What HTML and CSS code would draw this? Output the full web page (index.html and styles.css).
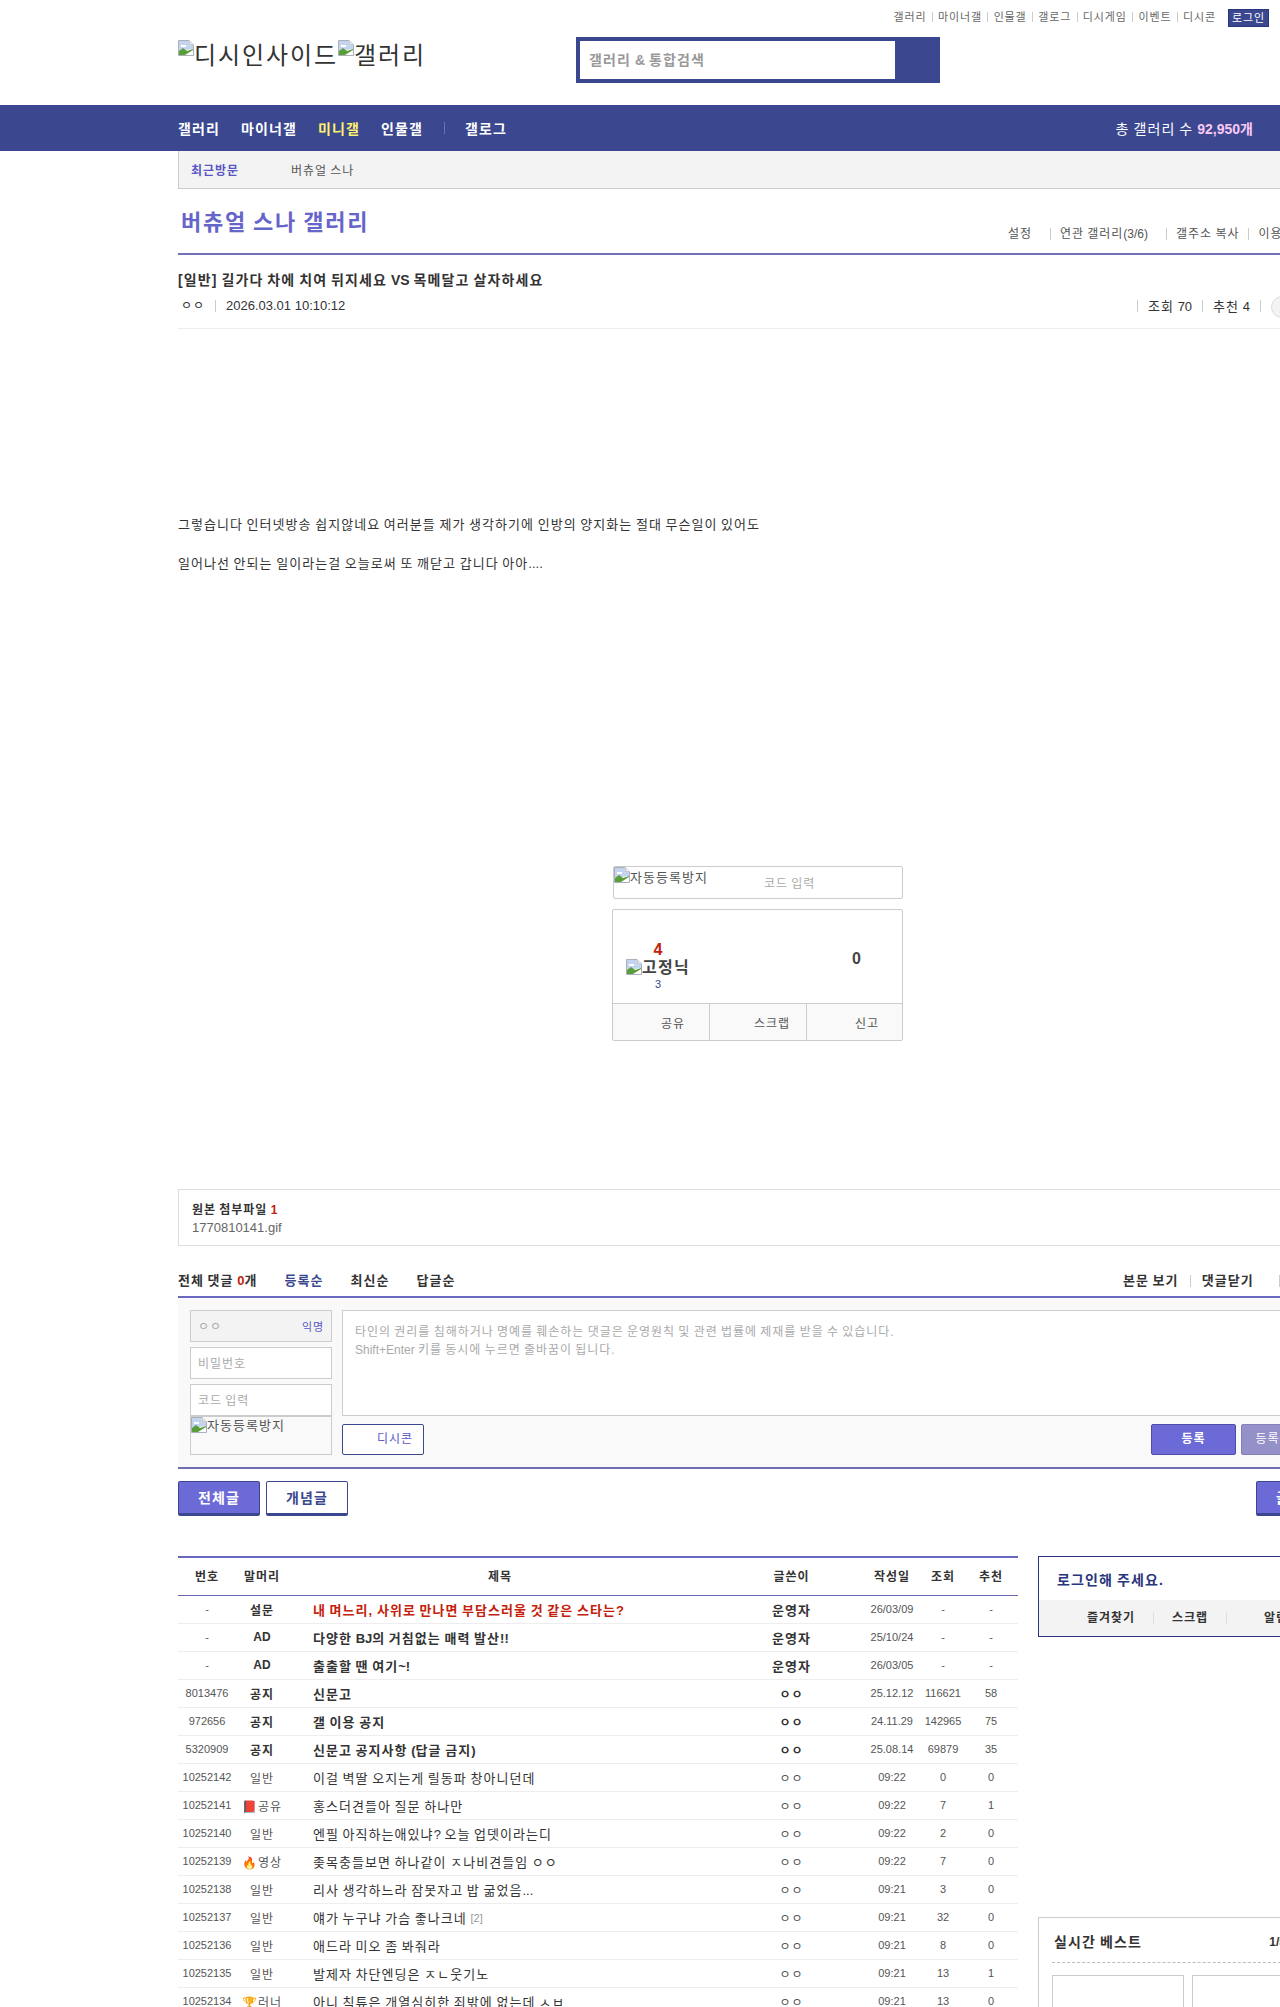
FILE: index.html
```html
<!DOCTYPE html>
<html lang="ko">
<head>
    <meta charset="UTF-8">
    <title>버츄얼 스나 갤러리</title>
    <link rel="stylesheet" href="styles.css">
</head>
<body>
    <svg class="sprite" width="0" height="0">
        <symbol id="broken" viewBox="0 0 16 16">
            <path d="M0.5 0.5H11L15.5 5V15.5H0.5Z" fill="#fff" stroke="#a9b0bb"/>
            <path d="M11 0.5V5H15.5" fill="#e8eaed" stroke="#a9b0bb"/>
            <path d="M1 1H10.5V5.5H15V9L1 11Z" fill="#c3d4f1"/>
            <path d="M1 15V11L5 8L9 11L15 9V10L7 15Z" fill="#5a9e3c"/>
            <path d="M3 5H8V7H3Z" fill="#fff"/>
        </symbol>
    </svg>
    <header class="top">
        <div class="top-links">
            <a>갤러리</a><i></i><a>마이너갤</a><i></i><a>인물갤</a><i></i><a>갤로그</a><i></i><a>디시게임</a><i></i><a>이벤트</a><i></i><a>디시콘</a>
            <span class="login-btn">로그인</span>
        </div>
        <div class="logo-row">
            <div class="logo"><svg class="broken"><use href="#broken"/></svg>디시인사이드<svg class="broken"><use href="#broken"/></svg>갤러리</div>
            <div class="search">
                <div class="search-input">갤러리 <span class="en">&amp;</span> 통합검색</div>
            </div>
        </div>
    </header>
    <nav class="gnb">
        <div class="gnb-left">
            <a>갤러리</a><a>마이너갤</a><a class="on">미니갤</a><a>인물갤</a><i></i><a>갤로그</a>
        </div>
        <div class="gnb-count">총 갤러리 수 <b><span class="en">92,950</span>개</b></div>
    </nav>

    <div class="wrap">
        <div class="recent"><b>최근방문</b><span>버츄얼 스나</span></div>

        <div class="gall-head">
            <h1>버츄얼 스나 갤러리</h1>
            <div class="gall-links">
                <a class="w-set">설정</a><i></i><a class="w-rel">연관 갤러리<span class="en">(3/6)</span></a><i></i><a>갤주소 복사</a><i></i><a>이용 안내</a>
            </div>
        </div>

        <div class="post-head">
            <h2>[일반] 길가다 차에 치여 뒤지세요 <span class="en">VS</span> 목메달고 살자하세요</h2>
            <div class="post-meta">
                <div class="post-writer"><span class="post-nick">ㅇㅇ</span><i></i><span class="en">2026.03.01 10:10:12</span></div>
                <div class="post-count"><i></i><span>조회 <span class="en">70</span></span><i></i><span>추천 <span class="en">4</span></span><i></i><span class="round"></span></div>
            </div>
        </div>

        <div class="post-body">
            <p>그렇습니다 인터넷방송 쉽지않네요 여러분들 제가 생각하기에 인방의 양지화는 절대 무슨일이 있어도</p>
            <p>일어나선 안되는 일이라는걸 오늘로써 또 깨닫고 갑니다 아아<span class="en">....</span></p>
        </div>

        <div class="vote">
            <div class="vote-code">
                <span class="alt"><svg class="broken"><use href="#broken"/></svg>자동등록방지</span>
                <span class="code-ph">코드 입력</span>
            </div>
            <div class="vote-box">
                <div class="vote-main">
                    <div class="vote-up">
                        <b class="up-num en">4</b>
                        <span class="fix"><svg class="broken"><use href="#broken"/></svg>고정닉</span>
                        <span class="fix-num en">3</span>
                    </div>
                    <b class="down-num en">0</b>
                </div>
                <div class="vote-btns"><span>공유</span><span>스크랩</span><span>신고</span></div>
            </div>
        </div>

        <div class="attach">
            <b>원본 첨부파일 <em class="en">1</em></b>
            <span class="en">1770810141.gif</span>
        </div>

        <div class="cmt-head">
            <div class="cmt-tabs"><b class="cmt-total">전체 댓글 <em class="en">0</em>개</b><b class="on">등록순</b><b>최신순</b><b>답글순</b></div>
            <div class="cmt-links"><b>본문 보기</b><i></i><b>댓글닫기</b><i class="gap"></i></div>
        </div>

        <div class="cmt-form">
            <div class="cmt-left">
                <div class="field name"><span>ㅇㅇ</span><em>익명</em></div>
                <div class="field">비밀번호</div>
                <div class="field code">코드 입력</div>
                <div class="field captcha"><svg class="broken"><use href="#broken"/></svg>자동등록방지</div>
            </div>
            <div class="cmt-right">
                <div class="cmt-text">타인의 권리를 침해하거나 명예를 훼손하는 댓글은 운영원칙 및 관련 법률에 제재를 받을 수 있습니다.<br><span class="en">Shift+Enter</span> 키를 동시에 누르면 줄바꿈이 됩니다.</div>
                <div class="cmt-btns">
                    <span class="dccon">디시콘</span>
                    <span class="reg">등록</span>
                    <span class="reg reg2">등록+추천</span>
                </div>
            </div>
        </div>

        <div class="list-btns">
            <span class="btn on">전체글</span>
            <span class="btn">개념글</span>
            <span class="btn on write">글쓰기</span>
        </div>

        <div class="list-wrap">
            <table class="list">
                <colgroup>
                    <col class="c-num"><col class="c-head"><col class="c-title"><col class="c-writer"><col class="c-date"><col class="c-view"><col class="c-rec">
                </colgroup>
                <thead>
                    <tr><th>번호</th><th>말머리</th><th class="th-title">제목</th><th>글쓴이</th><th>작성일</th><th>조회</th><th>추천</th></tr>
                </thead>
                <tbody>
                    <tr class="notice op"><td>-</td><td>설문</td><td class="title red">내 며느리, 사위로 만나면 부담스러울 것 같은 스타는<span class="en">?</span></td><td>운영자</td><td>26/03/09</td><td>-</td><td>-</td></tr>
                    <tr class="notice op"><td>-</td><td class="en">AD</td><td class="title">다양한 <span class="en">BJ</span>의 거침없는 매력 발산<span class="en">!!</span></td><td>운영자</td><td>25/10/24</td><td>-</td><td>-</td></tr>
                    <tr class="notice op"><td>-</td><td class="en">AD</td><td class="title">출출할 땐 여기<span class="en">~!</span></td><td>운영자</td><td>26/03/05</td><td>-</td><td>-</td></tr>
                    <tr class="notice"><td>8013476</td><td>공지</td><td class="title">신문고</td><td>ㅇㅇ</td><td>25.12.12</td><td>116621</td><td>58</td></tr>
                    <tr class="notice"><td>972656</td><td>공지</td><td class="title">갤 이용 공지</td><td>ㅇㅇ</td><td>24.11.29</td><td>142965</td><td>75</td></tr>
                    <tr class="notice"><td>5320909</td><td>공지</td><td class="title">신문고 공지사항 <span class="en">(</span>답글 금지<span class="en">)</span></td><td>ㅇㅇ</td><td>25.08.14</td><td>69879</td><td>35</td></tr>
                    <tr><td>10252142</td><td>일반</td><td class="title">이걸 벽딸 오지는게 릴동파 창아니던데</td><td>ㅇㅇ</td><td>09:22</td><td>0</td><td>0</td></tr>
                    <tr><td>10252141</td><td>📕공유</td><td class="title">홍스더견들아 질문 하나만</td><td>ㅇㅇ</td><td>09:22</td><td>7</td><td>1</td></tr>
                    <tr><td>10252140</td><td>일반</td><td class="title">엔필 아직하는애있냐<span class="en">?</span> 오늘 업뎃이라는디</td><td>ㅇㅇ</td><td>09:22</td><td>2</td><td>0</td></tr>
                    <tr><td>10252139</td><td>🔥영상</td><td class="title">좆목충들보면 하나같이 ㅈ나비견들임 ㅇㅇ</td><td>ㅇㅇ</td><td>09:22</td><td>7</td><td>0</td></tr>
                    <tr><td>10252138</td><td>일반</td><td class="title">리사 생각하느라 잠못자고 밥 굶었음<span class="en">...</span></td><td>ㅇㅇ</td><td>09:21</td><td>3</td><td>0</td></tr>
                    <tr><td>10252137</td><td>일반</td><td class="title">얘가 누구냐 가슴 좋나크네 <span class="reply en">[2]</span></td><td>ㅇㅇ</td><td>09:21</td><td>32</td><td>0</td></tr>
                    <tr><td>10252136</td><td>일반</td><td class="title">애드라 미오 좀 봐줘라</td><td>ㅇㅇ</td><td>09:21</td><td>8</td><td>0</td></tr>
                    <tr><td>10252135</td><td>일반</td><td class="title">발제자 차단엔딩은 ㅈㄴ웃기노</td><td>ㅇㅇ</td><td>09:21</td><td>13</td><td>1</td></tr>
                    <tr><td>10252134</td><td>🏆러너</td><td class="title">아니 칙튜은 개열심히한 죄밖에 없는데 ㅅㅂ</td><td>ㅇㅇ</td><td>09:21</td><td>13</td><td>0</td></tr>
                </tbody>
            </table>

            <aside class="side">
                <div class="login-box">
                    <strong>로그인해 주세요<span class="en">.</span></strong>
                    <div class="login-links"><span>즐겨찾기</span><i></i><span>스크랩</span><i></i><span class="alarm">알림</span></div>
                </div>
                <div class="best">
                    <div class="best-head"><b>실시간 베스트</b><span class="en">1/5</span></div>
                    <div class="best-cards"><div></div><div></div></div>
                </div>
            </aside>
        </div>
    </div>
</body>
</html>
```

FILE: styles.css
```css
* {
    box-sizing: border-box;
    letter-spacing: .08em;
    word-spacing: -.08em;
}
.en,
.list td:nth-child(1),
.list td:nth-child(5),
.list td:nth-child(6),
.list td:nth-child(7) {
    letter-spacing: 0;
    word-spacing: 0;
}
html, body {
    margin: 0;
    padding: 0;
    height: 2007px;
    overflow: hidden;
    background: #fff;
}
body {
    font-family: "Liberation Sans", "Noto Sans CJK KR", sans-serif;
    font-size: 12px;
    color: #333;
    width: 1280px;
}
.sprite {
    display: block;
    height: 0;
}
em {
    font-style: normal;
}
.broken {
    width: 16px;
    height: 16px;
    vertical-align: top;
}

/* header */
.top {
    height: 105px;
    padding-left: 178px;
}
.top-links {
    height: 37px;
    padding-top: 9px;
    padding-right: 11px;
    display: flex;
    justify-content: flex-end;
    align-items: flex-start;
    font-size: 11px;
    color: #666;
    line-height: 16px;
}
.top-links i {
    width: 1px;
    height: 10px;
    margin: 3px 5.3px 0;
    background: #ccc;
}
.login-btn {
    width: 41px;
    height: 18px;
    margin-left: 12px;
    background: #3b4890;
    border: 1px solid #29367c;
    color: #fff;
    text-align: center;
}
.logo-row {
    display: flex;
}
.logo {
    width: 398px;
    padding-top: 1px;
    font-size: 24px;
    line-height: 36px;
    white-space: nowrap;
    color: #333;
}
.logo .broken {
    margin-top: 2px;
}
.search {
    width: 364px;
    height: 46px;
    background: #3b4890;
    padding: 4px 45px 4px 4px;
}
.search-input {
    height: 38px;
    background: #fff;
    padding-left: 9px;
    line-height: 38px;
    font-size: 14px;
    font-weight: bold;
    color: #999;
}

/* nav */
.gnb {
    height: 46px;
    background: #3b4890;
    padding: 0 26px 0 178px;
    display: flex;
    justify-content: space-between;
    align-items: center;
    color: #fff;
    font-size: 14px;
}
.gnb-left {
    display: flex;
    align-items: center;
    font-weight: bold;
}
.gnb-left a {
    margin-right: 21px;
}
.gnb-left a.on {
    color: #fff26b;
}
.gnb-left i {
    width: 1px;
    height: 12px;
    background: #6a75b0;
    margin-right: 20px;
}
.gnb-count b {
    color: #f9c8f4;
}

/* content is wider than the window and runs off the right edge */
.wrap {
    margin-left: 178px;
    width: 1160px;
}
.recent {
    height: 38px;
    background: #f3f3f3;
    border-left: 1px solid #ccc;
    border-bottom: 1px solid #ccc;
    padding: 1px 0 0 12px;
    line-height: 38px;
    display: flex;
}
.recent b {
    width: 100px;
    color: #5a56c5;
}
.recent span {
    color: #555;
}
.gall-head {
    height: 66px;
    border-bottom: 2px solid #7270b8;
    display: flex;
}
.gall-head h1 {
    width: 827px;
    margin: 17px 0 0 3px;
    font-size: 22px;
    line-height: 34px;
    font-weight: bold;
    color: #6665c9;
}
.gall-links {
    margin-top: 37px;
    display: flex;
    white-space: nowrap;
    line-height: 16px;
    color: #555;
}
.gall-links i {
    width: 1px;
    height: 12px;
    margin: 2px 9px 0;
    background: #ccc;
}
.gall-links .w-set {
    margin-right: 9px;
}
.gall-links .w-rel {
    margin-right: 9px;
}

.post-head {
    height: 74px;
    border-bottom: 1px solid #eee;
}
.post-head h2 {
    margin: 0;
    padding-top: 15px;
    font-size: 14px;
    line-height: 20px;
    color: #333;
}
.post-meta {
    display: flex;
    width: 1160px;
    margin-top: 3px;
    font-size: 13px;
    line-height: 18px;
}
.post-writer {
    display: flex;
    align-items: center;
    padding-left: 3px;
    width: 949px;
}
.post-nick {
    font-size: 12px;
}
.post-writer i {
    width: 1px;
    height: 12px;
    margin: 0 10px;
    background: #ccc;
}
.post-count {
    display: flex;
    align-items: flex-start;
    padding-top: 5px;
}
.post-count i {
    width: 1px;
    height: 12px;
    margin: 2px 10px 0;
    background: #ccc;
}
.round {
    width: 30px;
    height: 22px;
    border-radius: 11px;
    background: #f3f3f3;
    border: 1px solid #ddd;
    margin-top: -2px;
}

.post-body {
    height: 537px;
    padding-top: 187px;
    font-size: 13px;
}
.post-body p {
    margin: 0 0 21px;
    line-height: 18px;
}

/* recommend box */
.vote {
    width: 291px;
    margin-left: 434px;
    height: 323px;
}
.vote-code {
    height: 33px;
    margin-left: 1px;
    border: 1px solid #ccc;
    border-radius: 2px;
    display: flex;
    font-size: 12px;
    color: #555;
}
.vote-code .alt {
    width: 150px;
    font-size: 13px;
    line-height: 22px;
    white-space: nowrap;
}
.code-ph {
    color: #aaa;
    padding-top: 9px;
    line-height: 16px;
}
.vote-box {
    margin-top: 10px;
    height: 132px;
    border: 1px solid #ccc;
    border-radius: 2px;
}
.vote-main {
    height: 93px;
    display: flex;
    position: relative;
}
.vote-up {
    width: 90px;
    display: flex;
    flex-direction: column;
    align-items: center;
    padding-top: 31px;
}
.up-num {
    font-size: 16px;
    line-height: 18px;
    color: #c4200b;
}
.fix {
    font-size: 16px;
    line-height: 18px;
    white-space: nowrap;
    font-weight: bold;
    color: #444;
}
.fix-num {
    font-size: 11px;
    line-height: 14px;
    color: #3b4890;
}
.down-num {
    position: absolute;
    left: 239px;
    top: 40px;
    font-size: 16px;
    line-height: 18px;
    color: #444;
}
.vote-btns {
    height: 37px;
    display: flex;
    border-top: 1px solid #ccc;
    background: #f9f9f9;
    color: #555;
}
.vote-btns span {
    flex: none;
    width: 96px;
    line-height: 41px;
    padding-left: 48px;
    white-space: nowrap;
}
.vote-btns span + span {
    width: 97px;
    border-left: 1px solid #ccc;
    padding-left: 44px;
}
.vote-btns span:last-child {
    padding-left: 48px;
}

.attach {
    height: 57px;
    border: 1px solid #ddd;
    border-width: 1px 0 1px 1px;
    padding: 11px 13px;
    display: flex;
    flex-direction: column;
    line-height: 18px;
}
.attach b {
    color: #333;
}
.attach em {
    color: #c4200b;
}
.attach span {
    font-size: 13px;
    color: #666;
    line-height: 18px;
}

/* comments */
.cmt-head {
    height: 52px;
    padding-top: 26px;
    display: flex;
    border-bottom: 2px solid #6967c0;
    line-height: 18px;
    font-size: 13px;
}
.cmt-tabs {
    display: flex;
    width: 945px;
}
.cmt-tabs b {
    margin-right: 27px;
}
.cmt-tabs em {
    color: #c4200b;
}
.cmt-tabs .on {
    color: #3b4890;
}
.cmt-links {
    display: flex;
}
.cmt-links b {
    white-space: nowrap;
}
.cmt-links i {
    width: 1px;
    height: 12px;
    margin: 3px 11px 0;
    background: #ccc;
}
.cmt-links i.gap {
    margin-left: 25px;
}
.cmt-form {
    height: 171px;
    background: #f9f9f9;
    border-bottom: 2px solid #6f6db3;
    padding: 12px 0 0 12px;
    display: flex;
    font-size: 12px;
}
.cmt-left {
    width: 142px;
    margin-right: 10px;
}
.field {
    height: 32px;
    border: 1px solid #ccc;
    background: #fff;
    padding-left: 7px;
    line-height: 32px;
    margin-bottom: 5px;
    color: #aaa;
}
.field.name {
    display: flex;
    justify-content: space-between;
    background: #f3f3f3;
    padding-right: 7px;
}
.field.name em {
    color: #5a56c5;
    font-size: 11px;
}
.field.code {
    margin-bottom: 0;
}
.field.captcha {
    height: 39px;
    border-top: 1px solid #ccc;
    background: #f9f9f9;
    padding-left: 0;
    font-size: 13px;
    line-height: 18px;
    color: #555;
    white-space: nowrap;
}
.cmt-right {
    flex: 1;
}
.cmt-text {
    height: 106px;
    background: #fff;
    border: 1px solid #ccc;
    padding: 12px 12px;
    line-height: 18px;
    color: #aaa;
}
.cmt-btns {
    display: flex;
    margin-top: 8px;
    height: 31px;
    line-height: 29px;
    text-align: center;
}
.dccon {
    width: 82px;
    border: 1px solid #3b4890;
    border-radius: 2px;
    background: #fff;
    color: #5a56c5;
    padding-left: 24px;
}
.reg {
    width: 85px;
    margin-left: 727px;
    background: #6c6ad6;
    border: 1px solid #4e4ca8;
    border-radius: 2px;
    color: #fff;
    font-weight: bold;
}
.reg2 {
    margin-left: 5px;
    flex: none;
    background: #9490c8;
    border-color: #8480b8;
    font-weight: normal;
    white-space: nowrap;
}

.list-btns {
    display: flex;
    padding-top: 12px;
    height: 87px;
}
.btn {
    width: 82px;
    height: 35px;
    margin-right: 6px;
    border: 1px solid #3b4890;
    border-bottom-width: 3px;
    border-radius: 2px;
    background: #fff;
    color: #3b4890;
    font-size: 14px;
    font-weight: bold;
    text-align: center;
    line-height: 32px;
}
.btn.on {
    background: #6c6ad6;
    color: #fff;
}
.btn.write {
    margin-left: 902px;
    margin-right: 0;
}

/* list */
.list-wrap {
    display: flex;
    align-items: flex-start;
}
.list {
    width: 840px;
    table-layout: fixed;
    border-collapse: collapse;
    border-top: 2px solid #6967c0;
    flex: none;
}
.c-num { width: 58px; }
.c-head { width: 52px; }
.c-title { width: 433px; }
.c-writer { width: 141px; }
.c-date { width: 60px; }
.c-view { width: 42px; }
.c-rec { width: 54px; }
.list th {
    height: 38px;
    font-size: 12px;
    font-weight: bold;
    color: #333;
    text-align: center;
    border-bottom: 1px solid #6967b0;
    padding: 0 0 2px;
    white-space: nowrap;
}
.list .th-title {
    padding-right: 9px;
}
.list td {
    height: 28px;
    padding: 0;
    text-align: center;
    font-size: 11px;
    color: #555;
    border-bottom: 1px solid #eee;
    white-space: nowrap;
}
.list td:nth-child(2) {
    font-size: 12px;
}
.list td:nth-child(4) {
    font-size: 12px;
}
.list .op td:nth-child(4) {
    font-size: 13px;
}
.list td.title {
    text-align: left;
    padding-left: 25px;
    font-size: 13px;
    color: #333;
}
.list .notice td:nth-child(2),
.list .notice td:nth-child(4),
.list .notice td.title {
    font-weight: bold;
    color: #333;
}
.list .notice td.red {
    color: #c4200b;
}
.reply {
    color: #999;
    font-size: 11px;
    vertical-align: 1px;
}

/* sidebar */
.side {
    width: 262px;
    margin-left: 20px;
    flex: none;
}
.login-box {
    height: 81px;
    border: 1px solid #29367c;
}
.login-box strong {
    display: block;
    height: 43px;
    padding: 13px 18px 0;
    font-size: 14px;
    line-height: 20px;
    color: #29367c;
}
.login-links {
    height: 36px;
    background: #f3f3f3;
    display: flex;
    padding: 9px 0 0 48px;
    line-height: 18px;
    font-size: 12px;
    font-weight: bold;
    white-space: nowrap;
}
.login-links i {
    width: 1px;
    height: 12px;
    margin: 3px 18px 0;
    background: #ddd;
}
.login-links .alarm {
    margin-left: 19px;
}
.best {
    margin-top: 280px;
    height: 200px;
    border: 1px solid #ccc;
    padding: 0 13px;
}
.best-head {
    height: 45px;
    padding: 14px 0 0 2px;
    display: flex;
    justify-content: space-between;
    border-bottom: 1px dashed #bbb;
    font-size: 14px;
    line-height: 20px;
}
.best-head span {
    font-weight: bold;
    font-size: 12px;
}
.best-cards {
    display: flex;
    gap: 8px;
    margin-top: 12px;
}
.best-cards div {
    flex: none;
    width: 132px;
    height: 120px;
    border: 1px solid #ccc;
}
```
